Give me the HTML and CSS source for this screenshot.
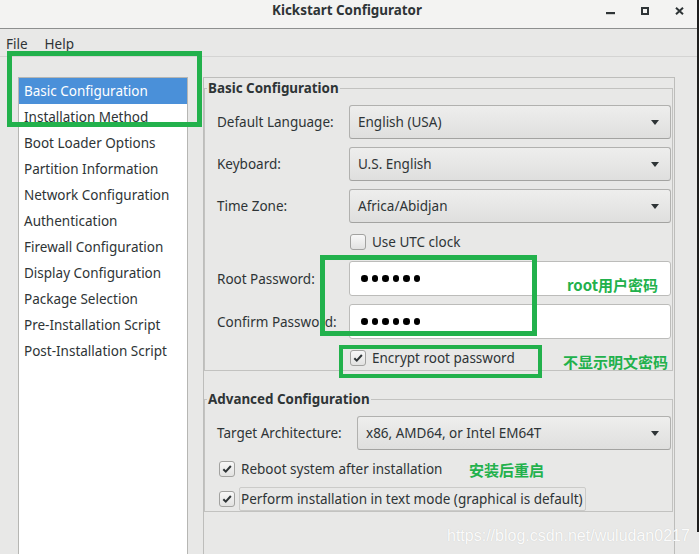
FILE: index.html
```html
<!DOCTYPE html>
<html lang="en">
<head>
<meta charset="utf-8">
<title>Kickstart Configurator</title>
<link rel="stylesheet" href="styles.css">
</head>
<body>
<div class="window">
  <header class="titlebar">
    <div class="title">Kickstart Configurator</div>
    <div class="wm-buttons">
      <svg class="wm-icon" width="9" height="8" viewBox="0 0 9 8"><rect x="0" y="5" width="9" height="2.2" fill="#2e3436"/></svg>
      <svg class="wm-icon" width="8" height="8" viewBox="0 0 8 8"><rect x="1" y="1" width="6" height="6" fill="none" stroke="#2e3436" stroke-width="2"/></svg>
      <svg class="wm-icon" width="9" height="8" viewBox="0 0 9 8"><path d="M1 0.8 L8 7.2 M8 0.8 L1 7.2" stroke="#2e3436" stroke-width="2"/></svg>
    </div>
  </header>

  <nav class="menubar">
    <span class="menu-item">File</span>
    <span class="menu-item">Help</span>
  </nav>

  <main class="main">
    <ul class="sidebar">
      <li class="selected">Basic Configuration</li>
      <li>Installation Method</li>
      <li>Boot Loader Options</li>
      <li>Partition Information</li>
      <li>Network Configuration</li>
      <li>Authentication</li>
      <li>Firewall Configuration</li>
      <li>Display Configuration</li>
      <li>Package Selection</li>
      <li>Pre-Installation Script</li>
      <li>Post-Installation Script</li>
    </ul>

    <section class="panel">
      <fieldset class="frame">
        <legend>Basic Configuration</legend>
        <div class="form form-basic">
          <div class="row combo-row">
            <span class="label">Default Language:</span>
            <div class="combo"><span>English (USA)</span><i class="arrow"></i></div>
          </div>
          <div class="row combo-row gap8">
            <span class="label">Keyboard:</span>
            <div class="combo"><span>U.S. English</span><i class="arrow"></i></div>
          </div>
          <div class="row combo-row gap8">
            <span class="label">Time Zone:</span>
            <div class="combo"><span>Africa/Abidjan</span><i class="arrow"></i></div>
          </div>
          <div class="row check-row gap11">
            <span class="check"></span>
            <span class="check-text">Use UTC clock</span>
          </div>
          <div class="row entry-row gap11">
            <span class="label">Root Password:</span>
            <div class="entry"><i class="dot"></i><i class="dot"></i><i class="dot"></i><i class="dot"></i><i class="dot"></i><i class="dot"></i></div>
          </div>
          <div class="row entry-row gap8">
            <span class="label">Confirm Password:</span>
            <div class="entry"><i class="dot"></i><i class="dot"></i><i class="dot"></i><i class="dot"></i><i class="dot"></i><i class="dot"></i></div>
          </div>
          <div class="row check-row gap11">
            <span class="check checked"><svg width="16" height="16" viewBox="0 0 16 16"><path d="M3.8 8.2 L6.6 11 L12.4 4.6" fill="none" stroke="#2e3436" stroke-width="2.3"/></svg></span>
            <span class="check-text">Encrypt root password</span>
          </div>
        </div>
      </fieldset>

      <fieldset class="frame frame-adv">
        <legend>Advanced Configuration</legend>
        <div class="form form-adv">
          <div class="row combo-row">
            <span class="label label-wide">Target Architecture:</span>
            <div class="combo"><span>x86, AMD64, or Intel EM64T</span><i class="arrow"></i></div>
          </div>
          <div class="row adv-check gap7">
            <span class="check checked"><svg width="16" height="16" viewBox="0 0 16 16"><path d="M3.8 8.2 L6.6 11 L12.4 4.6" fill="none" stroke="#2e3436" stroke-width="2.3"/></svg></span>
            <span class="check-text">Reboot system after installation</span>
          </div>
          <div class="row adv-check gap6">
            <span class="check checked"><svg width="16" height="16" viewBox="0 0 16 16"><path d="M3.8 8.2 L6.6 11 L12.4 4.6" fill="none" stroke="#2e3436" stroke-width="2.3"/></svg></span>
            <span class="check-text focused">Perform installation in text mode (graphical is default)</span>
          </div>
        </div>
      </fieldset>
    </section>
  </main>

  <div class="mark mark-list"></div>
  <div class="mark mark-pw"></div>
  <div class="mark mark-enc"></div>
  <div class="note note-root">root用户密码</div>
  <div class="note note-enc">不显示明文密码</div>
  <div class="note note-reboot">安装后重启</div>
  <div class="watermark">https://blog.csdn.net/wuludan0217</div>
  <div class="edge"></div>
</div>
</body>
</html>
```

FILE: styles.css
```css
* { box-sizing: border-box; }
html, body { margin: 0; padding: 0; }
body {
  width: 699px;
  height: 554px;
  overflow: hidden;
  background: #e8e8e7;
  font-family: "Noto Sans", "Open Sans", "DejaVu Sans", sans-serif;
  font-size: 13.5px;
  line-height: 18px;
  color: #2e3436;
}
.window {
  position: relative;
  width: 699px;
  height: 554px;
  display: flex;
  flex-direction: column;
  overflow: hidden;
}

/* title bar */
.titlebar {
  flex: none;
  height: 29px;
  background: #f3f3f2;
  border-bottom: 1px solid #8d8f8f;
  display: grid;
  grid-template-columns: 1fr auto 1fr;
  align-items: start;
}
.title {
  grid-column: 2;
  font-weight: bold;
  font-size: 13.4px;
  line-height: 17px;
  padding-top: 2px;
  margin-right: 5px;
  color: #2e3436;
}
.wm-buttons {
  grid-column: 3;
  justify-self: end;
  display: flex;
  align-items: flex-start;
  gap: 26px;
  margin-top: 7px;
  margin-right: 15px;
}
.wm-icon { display: block; }

/* menu bar */
.menubar {
  flex: none;
  height: 28px;
  border-bottom: 1px solid #d4d4d3;
  display: flex;
  align-items: center;
  gap: 17px;
  padding-left: 6px;
  padding-top: 2px;
}

/* main area */
.main {
  flex: 1;
  min-height: 0;
  display: flex;
  align-items: stretch;
  padding: 20px 0 0 18px;
  gap: 15px;
}
.sidebar {
  list-style: none;
  margin: 0;
  padding: 0;
  width: 170px;
  flex: none;
  background: #ffffff;
  border: 1px solid #b6b6b3;
  border-bottom: none;
}
.sidebar li {
  height: 26px;
  line-height: 27px;
  padding-left: 5px;
  white-space: nowrap;
  color: #2e3436;
}
.sidebar li.selected {
  background: #4a90d9;
  color: #ffffff;
}

.panel {
  width: 472px;
  flex: none;
  border: 1px solid #bdbdbb;
  border-bottom: none;
  padding: 1px 1px 0 0;
}
.frame {
  margin: 0;
  padding: 0;
  border: 1px solid #c2c2c0;
  min-width: 0;
}
.frame legend {
  font-weight: bold;
  font-size: 13.4px;
  line-height: 18px;
  padding: 0 1px;
  margin-left: 2px;
  color: #2e3436;
}
.frame-adv { margin-top: 19px; }

.form {
  display: flex;
  flex-direction: column;
  padding: 8px 1px 4px 12px;
}
.row {
  display: flex;
  align-items: center;
}
.gap6 { margin-top: 6px; }
.gap7 { margin-top: 7px; }
.gap8 { margin-top: 8px; }
.gap11 { margin-top: 11px; }

.label {
  width: 132px;
  flex: none;
  white-space: nowrap;
}
.label-wide { width: 140px; }

.combo-row { height: 34px; }
.entry-row { height: 35px; }
.check-row { height: 16px; padding-left: 133px; }

.combo {
  flex: 1;
  height: 34px;
  display: flex;
  align-items: center;
  justify-content: space-between;
  padding: 0 11px 0 8px;
  border: 1px solid #b1b1af;
  border-bottom-color: #a3a3a1;
  border-radius: 3px;
  background: linear-gradient(#eeeeed, #dfdfde);
  white-space: nowrap;
}
.arrow {
  width: 0;
  height: 0;
  border-left: 4.5px solid transparent;
  border-right: 4.5px solid transparent;
  border-top: 5px solid #2e3436;
}

.entry {
  flex: 1;
  height: 35px;
  display: flex;
  align-items: center;
  gap: 4px;
  padding-left: 11px;
  background: #ffffff;
  border: 1px solid #bcbcba;
  border-radius: 3px;
}
.dot {
  width: 6.5px;
  height: 6.5px;
  border-radius: 50%;
  background: #000000;
}

.check {
  width: 16px;
  height: 16px;
  flex: none;
  border: 1px solid #a2a2a0;
  border-radius: 3px;
  background: linear-gradient(#f8f8f8, #e2e2e1);
  display: flex;
  align-items: center;
  justify-content: center;
}
.check svg { display: block; }
.check-text {
  margin-left: 6px;
  white-space: nowrap;
}

.form-adv { padding-bottom: 0; }
.adv-check { height: 24px; padding-left: 2px; }
.check-text.focused {
  margin-left: 4px;
  height: 24px;
  line-height: 22px;
  padding: 0 2px 0 1px;
  border: 1px solid #cbcbc9;
  border-radius: 2px;
}

/* annotations (drawn over the window) */
.mark {
  position: absolute;
  border: 5px solid #22b14c;
}
.mark-list { left: 7px; top: 51px; width: 195px; height: 76px; }
.mark-pw { left: 320px; top: 255px; width: 217px; height: 81px; }
.mark-enc { left: 339px; top: 345px; width: 203px; height: 33px; border-width: 4px; }

.note {
  position: absolute;
  font-family: "Noto Sans CJK SC", "Noto Sans", sans-serif;
  font-weight: bold;
  font-size: 15px;
  line-height: 18px;
  color: #22b14c;
  white-space: nowrap;
}
.note-root { left: 567px; top: 276px; }
.note-enc { left: 563px; top: 353px; }
.note-reboot { left: 469px; top: 461px; }

.watermark {
  position: absolute;
  left: 447px;
  top: 526px;
  font-family: "Liberation Sans", Arial, sans-serif;
  font-size: 16px;
  line-height: 20px;
  color: #fbfbfb;
  text-shadow: 0 0 1px rgba(0, 0, 0, 0.15);
  white-space: nowrap;
}
.edge {
  position: absolute;
  right: 0;
  top: 0;
  width: 2px;
  height: 532px;
  background: #1e1e1e;
}
```
